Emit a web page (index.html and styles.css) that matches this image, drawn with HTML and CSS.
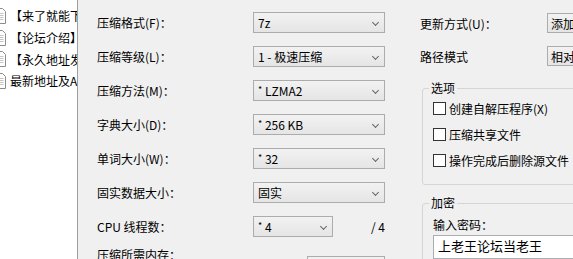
FILE: index.html
```html
<!DOCTYPE html>
<html lang="zh-CN">
<head>
    <meta charset="UTF-8">
    <title>添加到压缩包</title>
<link rel="stylesheet" href="styles.css">
</head>
<body>
    <div class="file-list">
        <div class="file-row"><svg class="doc" width="16" height="16" viewBox="0 0 16 16"><path d="M2.5 0.5h8l3 3v12h-11z" fill="#fff" stroke="#8c8c8c"/><path d="M4.5 5.5h7M4.5 7.5h7M4.5 9.5h7M4.5 11.5h7" stroke="#c4c4c4"/></svg><span>【来了就能下</span></div>
        <div class="file-row"><svg class="doc" width="16" height="16" viewBox="0 0 16 16"><path d="M2.5 0.5h8l3 3v12h-11z" fill="#fff" stroke="#8c8c8c"/><path d="M4.5 5.5h7M4.5 7.5h7M4.5 9.5h7M4.5 11.5h7" stroke="#c4c4c4"/></svg><span>【论坛介绍】</span></div>
        <div class="file-row"><svg class="doc" width="16" height="16" viewBox="0 0 16 16"><path d="M2.5 0.5h8l3 3v12h-11z" fill="#fff" stroke="#8c8c8c"/><path d="M4.5 5.5h7M4.5 7.5h7M4.5 9.5h7M4.5 11.5h7" stroke="#c4c4c4"/></svg><span>【永久地址发</span></div>
        <div class="file-row"><svg class="doc" width="16" height="16" viewBox="0 0 16 16"><path d="M2.5 0.5h8l3 3v12h-11z" fill="#fff" stroke="#8c8c8c"/><path d="M4.5 5.5h7M4.5 7.5h7M4.5 9.5h7M4.5 11.5h7" stroke="#c4c4c4"/></svg><span>最新地址及APP</span></div>
    </div>

    <div class="dialog">
        <div class="col-left">
            <div class="field">
                <label>压缩格式(F)：</label>
                <div class="combo"><span>7z</span><i class="arrow"></i></div>
            </div>
            <div class="field">
                <label>压缩等级(L)：</label>
                <div class="combo"><span>1 - 极速压缩</span><i class="arrow"></i></div>
            </div>
            <div class="field">
                <label>压缩方法(M)：</label>
                <div class="combo"><span><sup>*</sup> LZMA2</span><i class="arrow"></i></div>
            </div>
            <div class="field">
                <label>字典大小(D)：</label>
                <div class="combo"><span><sup>*</sup> 256 KB</span><i class="arrow"></i></div>
            </div>
            <div class="field">
                <label>单词大小(W)：</label>
                <div class="combo"><span><sup>*</sup> 32</span><i class="arrow"></i></div>
            </div>
            <div class="field">
                <label>固实数据大小：</label>
                <div class="combo"><span>固实</span><i class="arrow"></i></div>
            </div>
            <div class="field">
                <label>CPU 线程数：</label>
                <div class="split">
                    <div class="combo combo-small"><span><sup>*</sup> 4</span><i class="arrow"></i></div>
                    <span class="total">/ 4</span>
                </div>
            </div>
            <div class="field field-mem">
                <label>压缩所需内存：</label>
                <div class="readout"></div>
            </div>
        </div>

        <div class="col-right">
            <div class="field-r">
                <label>更新方式(U)：</label>
                <div class="combo"><span>添加并替换文件</span></div>
            </div>
            <div class="field-r">
                <label>路径模式</label>
                <div class="combo"><span>相对路径</span></div>
            </div>

            <fieldset class="group group-options">
                <legend>选项</legend>
                <div class="check"><span class="box"></span>创建自解压程序<small>(X)</small></div>
                <div class="check"><span class="box"></span>压缩共享文件</div>
                <div class="check"><span class="box"></span>操作完成后删除源文件</div>
            </fieldset>

            <fieldset class="group group-crypt">
                <legend>加密</legend>
                <div class="pw-label">输入密码：</div>
                <div class="pw-input">上老王论坛当老王</div>
            </fieldset>
        </div>
    </div>
</body>
</html>
```

FILE: styles.css
```css
* {
    margin: 0;
    padding: 0;
    box-sizing: border-box;
}

body {
    width: 573px;
    height: 259px;
    overflow: hidden;
    display: flex;
    background: #f0f0f0;
    font-family: "Noto Sans CJK SC", "Noto Sans", sans-serif;
    font-size: 12px;
    color: #000;
}

/* file list on the left */
.file-list {
    width: 78px;
    flex-shrink: 0;
    background: #fff;
    border-right: 1px solid #a0a0a0;
    padding-top: 5px;
    overflow: hidden;
}

.file-row {
    height: 21.7px;
    display: flex;
    align-items: center;
    white-space: nowrap;
}

.doc {
    margin-left: -8px;
    margin-right: 2px;
    flex-shrink: 0;
}

/* dialog area */
.dialog {
    display: flex;
    padding: 12px 0 0 19px;
}

.col-left {
    width: 288px;
    flex-shrink: 0;
}

.field {
    display: grid;
    grid-template-columns: 156px 132px;
    align-items: center;
    height: 21px;
    margin-bottom: 13px;
}

.field-mem {
    margin-top: -4px;
    align-items: start;
}

.field-mem label {
    line-height: 18px;
}

.combo {
    position: relative;
    height: 21px;
    border: 1px solid #acacac;
    background: linear-gradient(#f2f2f2, #e5e5e5);
    display: flex;
    align-items: center;
    padding-left: 4px;
    white-space: nowrap;
    overflow: hidden;
}

.combo sup {
    font-size: 9px;
    vertical-align: 3px;
}

.arrow {
    position: absolute;
    right: 6px;
    top: 7px;
    width: 5px;
    height: 5px;
    border-right: 1.5px solid #666;
    border-bottom: 1.5px solid #666;
    transform: rotate(45deg);
}

.split {
    display: flex;
    align-items: center;
    justify-content: space-between;
}

.combo-small {
    width: 80px;
}

.readout {
    margin-left: 54px;
    margin-top: 10px;
    height: 22px;
    border: 1px solid #acacac;
    background: #f0f0f0;
}

/* right column */
.col-right {
    margin-left: 35px;
    width: 300px;
    flex-shrink: 0;
}

.field-r {
    display: grid;
    grid-template-columns: 127px 120px;
    align-items: center;
    height: 20px;
    margin-top: 1px;
    margin-bottom: 13px;
}

.field-r .combo {
    height: 20px;
    padding-left: 3px;
}

.group {
    width: 200px;
    margin-left: 2px;
    border: 1px solid #d5d5d5;
    border-radius: 3px;
    padding: 1px 0 0 10px;
}

.group legend {
    margin-left: -4px;
    padding: 0 2px;
    line-height: 18px;
}

.group-options {
    margin-top: 1px;
    height: 106px;
    padding-top: 0;
}

.check {
    display: flex;
    align-items: center;
    height: 26px;
    white-space: nowrap;
}

.check:first-of-type {
    margin-top: -2px;
}

.check small {
    font-size: 12px;
}

.box {
    width: 13px;
    height: 13px;
    border: 1px solid #333;
    background: #fff;
    margin-right: 3px;
    flex-shrink: 0;
}

.group-crypt {
    margin-top: 9px;
    height: 80px;
}

.pw-label {
    line-height: 20px;
    margin-top: 2px;
}

.pw-input {
    margin-top: 0;
    height: 24px;
    border: 1px solid #abadb3;
    background: #fff;
    padding: 0 0 0 4px;
    line-height: 20px;
    white-space: nowrap;
    font-size: 13px;
}
```
